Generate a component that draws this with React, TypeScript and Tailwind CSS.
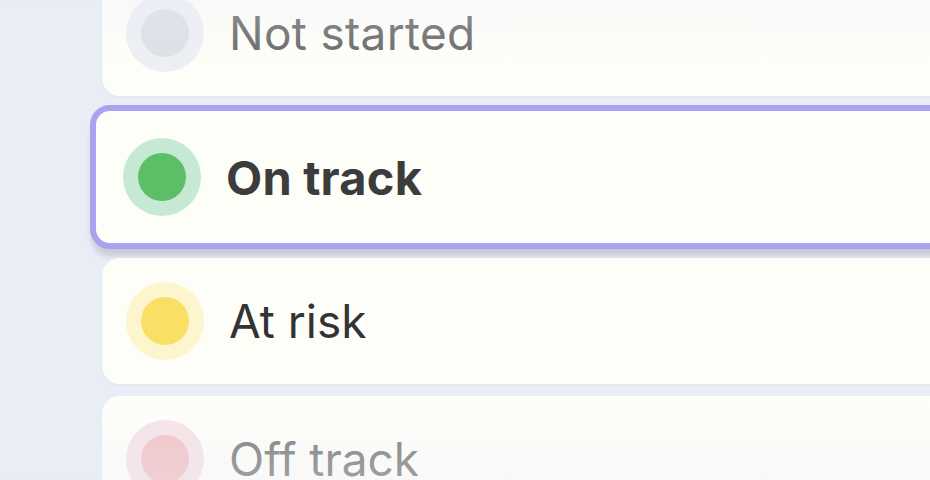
import React from "react";

function Dot({ ring, dot }: { ring: string; dot: string }) {
  return (
    <div
      className="w-[78px] h-[78px] rounded-full flex items-center justify-center shrink-0"
      style={{ backgroundColor: ring }}
    >
      <div className="w-[48px] h-[48px] rounded-full" style={{ backgroundColor: dot }} />
    </div>
  );
}

export default function App() {
  const font = { fontFamily: 'Inter, "Noto Sans", sans-serif' };
  return (
    <div
      className="relative w-[930px] h-[480px] overflow-hidden bg-[#e9edf6]"
      style={font}
    >
      <div className="flex flex-col mt-[-30px]">
        {/* Not started */}
        <div className="ml-[102px] w-[900px] h-[126px] rounded-[18px] bg-[#fefef9] flex items-center pl-[24px] gap-[25px] shadow-[0_1px_3px_rgba(100,110,140,0.08)]">
          <Dot ring="#eeeff5" dot="#dde0e5" />
          <span className="text-[46px] leading-none text-[#6a6a6a] tracking-[0.3px]">Not started</span>
        </div>

        {/* On track (selected) */}
        <div className="mt-[9px] ml-[90px] w-[900px] h-[144px] rounded-[20px] bg-[#fefef9] border-[6px] border-[#a9a3ef] flex items-center pl-[27px] gap-[25px] shadow-[0_9px_6px_-2px_rgba(60,70,90,0.2)]">
          <Dot ring="#c6e9d3" dot="#5cbf68" />
          <span className="text-[47px] leading-none font-bold text-[#3c3c3c] tracking-[0.2px]">On track</span>
        </div>

        {/* At risk */}
        <div className="mt-[9px] ml-[102px] w-[900px] h-[126px] rounded-[18px] bg-[#fefef9] flex items-center pl-[24px] gap-[25px] shadow-[0_1px_3px_rgba(100,110,140,0.08)]">
          <Dot ring="#fdf5cd" dot="#fadf66" />
          <span className="text-[46px] leading-none text-[#333333]">At risk</span>
        </div>

        {/* Off track */}
        <div className="mt-[12px] ml-[102px] w-[900px] h-[126px] rounded-[18px] bg-[#fefef9] flex items-center pl-[24px] gap-[25px]">
          <Dot ring="#f6e3e7" dot="#f2c3c6" />
          <span className="text-[46px] leading-none text-[#7e7e7e]">Off track</span>
        </div>
      </div>

      {/* fades */}
      <div className="pointer-events-none absolute left-0 top-0 w-full h-[60px] bg-gradient-to-b from-[rgba(233,237,246,0.3)] to-transparent" />
      <div className="pointer-events-none absolute left-0 bottom-0 w-full h-[80px] bg-gradient-to-t from-[rgba(233,237,246,0.3)] to-transparent" />
    </div>
  );
}
